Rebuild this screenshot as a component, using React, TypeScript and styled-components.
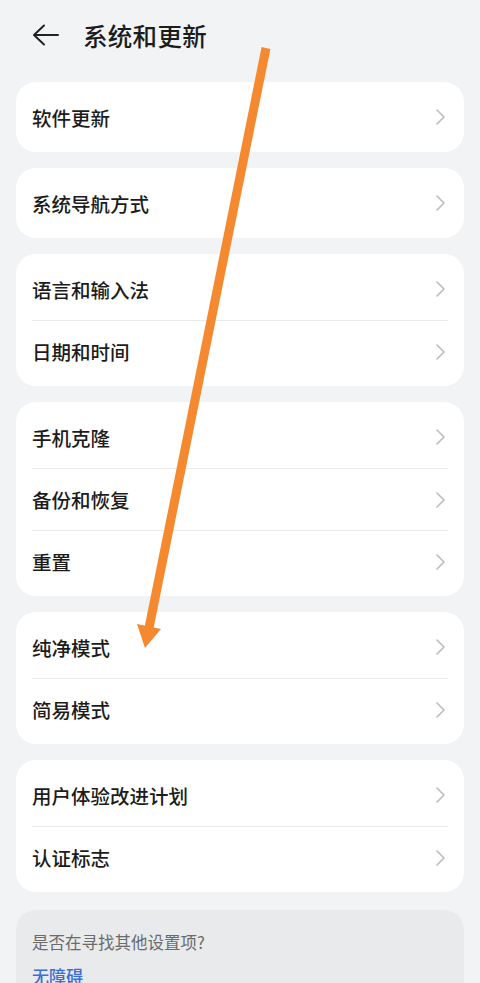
import React from "react";
import styled, { createGlobalStyle } from "styled-components";

const GlobalStyle = createGlobalStyle`
    html, body {
        margin: 0;
        padding: 0;
        background: #f1f3f5;
        font-family: "Noto Sans CJK SC", "Noto Sans", sans-serif;
    }
`;

const Page = styled.div`
    position: relative;
    width: 480px;
    min-height: 983px;
    overflow: hidden;
    background: #f1f3f5;
`;

const Header = styled.div`
    height: 70px;
    display: flex;
    align-items: center;
    gap: 24px;
    padding-left: 32px;
    box-sizing: border-box;
`;

const Title = styled.h1`
    margin: 0;
    font-size: 24.5px;
    font-weight: 500;
    color: #1c1c1c;
    letter-spacing: 0.3px;
`;

const List = styled.div`
    display: flex;
    flex-direction: column;
    gap: 16px;
    padding: 12px 16px 0;
`;

const Card = styled.div<{ $muted?: boolean }>`
    background: ${(p) => (p.$muted ? "#e8eaec" : "#ffffff")};
    border-radius: 20px;
    padding: ${(p) => (p.$muted ? "20px 16px 24px" : "4px 16px")};
    margin-top: ${(p) => (p.$muted ? "2px" : "0")};
`;

const Row = styled.div`
    height: 62px;
    box-sizing: border-box;
    display: flex;
    align-items: center;
    justify-content: space-between;
    & + & {
        border-top: 1px solid #ebebeb;
    }
`;

const Label = styled.span`
    font-size: 19.5px;
    font-weight: 500;
    color: #1c1c1c;
`;

const Hint = styled.div`
    font-size: 16.5px;
    color: #6b6b6b;
    line-height: 24px;
`;

const Link = styled.div`
    margin-top: 10px;
    font-size: 17px;
    font-weight: 500;
    color: #3a6fd8;
    line-height: 24px;
`;

const Overlay = styled.svg`
    position: absolute;
    left: 0;
    top: 0;
    pointer-events: none;
`;

function Chevron() {
    return (
        <svg width="12" height="18" viewBox="0 0 12 18" style={{ marginRight: 2 }}>
            <path d="M3 2 L10 9 L3 16" fill="none" stroke="#bcbcbc" strokeWidth="1.6" strokeLinecap="round" strokeLinejoin="round" />
        </svg>
    );
}

function BackArrow() {
    return (
        <svg width="27" height="22" viewBox="0 0 27 22">
            <path d="M2 11 H26 M12 1.5 L2 11 L12 20.5" fill="none" stroke="#222" strokeWidth="2" strokeLinecap="round" strokeLinejoin="round" />
        </svg>
    );
}

const groups: string[][] = [
    ["软件更新"],
    ["系统导航方式"],
    ["语言和输入法", "日期和时间"],
    ["手机克隆", "备份和恢复", "重置"],
    ["纯净模式", "简易模式"],
    ["用户体验改进计划", "认证标志"],
];

export default function App() {
    return (
        <>
            <GlobalStyle />
            <Page>
                <Header>
                    <BackArrow />
                    <Title>系统和更新</Title>
                </Header>
                <List>
                    {groups.map((items, i) => (
                        <Card key={i}>
                            {items.map((label) => (
                                <Row key={label}>
                                    <Label>{label}</Label>
                                    <Chevron />
                                </Row>
                            ))}
                        </Card>
                    ))}
                    <Card $muted>
                        <Hint>是否在寻找其他设置项?</Hint>
                        <Link>无障碍</Link>
                    </Card>
                </List>
                <Overlay width="480" height="983" viewBox="0 0 480 983">
                    <line x1="266" y1="48" x2="149" y2="628" stroke="#f5892f" strokeWidth="9" />
                    <polygon points="137,624 161,629 145,648" fill="#f5892f" />
                </Overlay>
            </Page>
        </>
    );
}
